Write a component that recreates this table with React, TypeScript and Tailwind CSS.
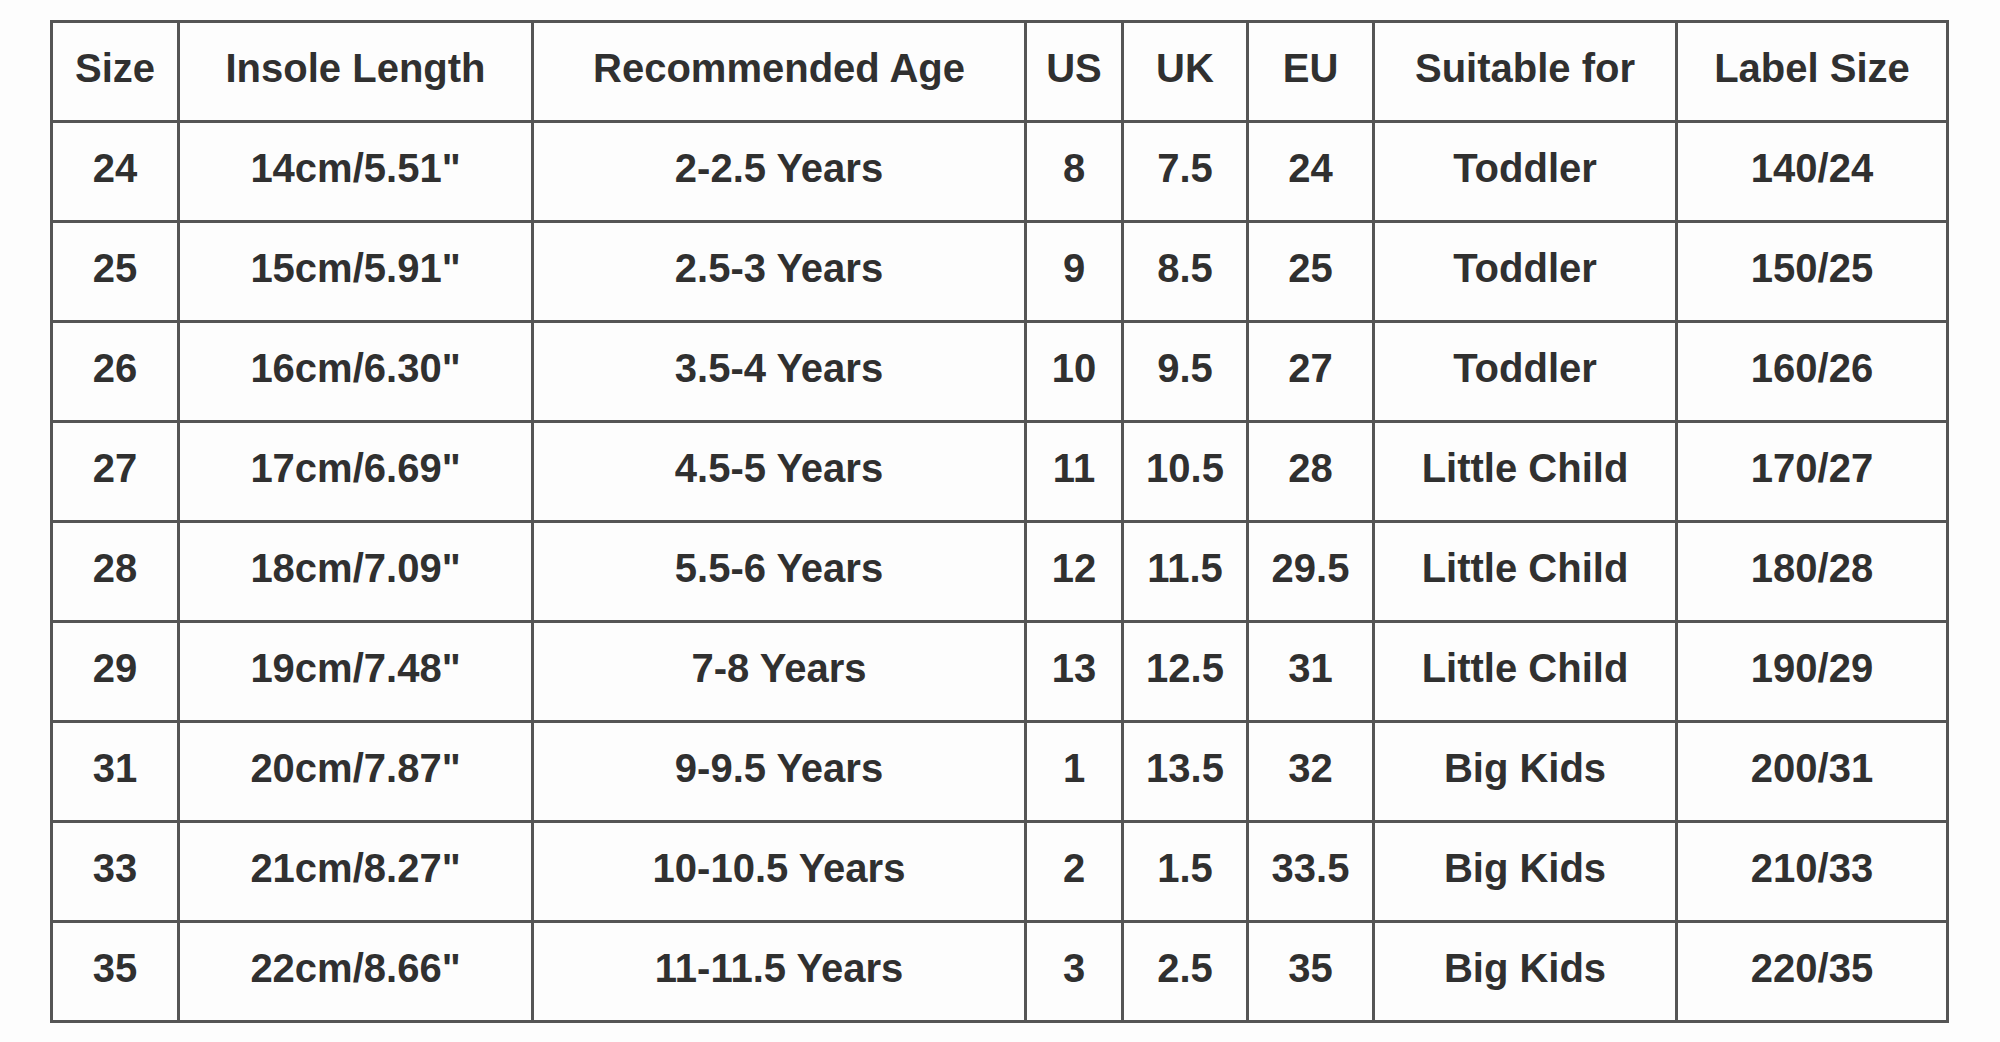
const headers = ['Size', 'Insole Length', 'Recommended Age', 'US', 'UK', 'EU', 'Suitable for', 'Label Size'];

const rows: string[][] = [
  ['24', '14cm/5.51"', '2-2.5 Years', '8', '7.5', '24', 'Toddler', '140/24'],
  ['25', '15cm/5.91"', '2.5-3 Years', '9', '8.5', '25', 'Toddler', '150/25'],
  ['26', '16cm/6.30"', '3.5-4 Years', '10', '9.5', '27', 'Toddler', '160/26'],
  ['27', '17cm/6.69"', '4.5-5 Years', '11', '10.5', '28', 'Little Child', '170/27'],
  ['28', '18cm/7.09"', '5.5-6 Years', '12', '11.5', '29.5', 'Little Child', '180/28'],
  ['29', '19cm/7.48"', '7-8 Years', '13', '12.5', '31', 'Little Child', '190/29'],
  ['31', '20cm/7.87"', '9-9.5 Years', '1', '13.5', '32', 'Big Kids', '200/31'],
  ['33', '21cm/8.27"', '10-10.5 Years', '2', '1.5', '33.5', 'Big Kids', '210/33'],
  ['35', '22cm/8.66"', '11-11.5 Years', '3', '2.5', '35', 'Big Kids', '220/35'],
];

function Cell({ text }: { text: string }) {
  return (
    <div className="flex h-[97px] items-center justify-center bg-[#fdfdfd] pb-[7px] text-[40px] font-bold leading-none text-[#303030]">
      {text}
    </div>
  );
}

export default function App() {
  return (
    <div className="min-h-screen w-full bg-[#fdfdfd] pl-[50px] pt-[20px] [font-family:Liberation_Sans,Arial,sans-serif]">
      <div className="grid w-fit grid-cols-[124px_351px_490px_94px_122px_123px_300px_268px] gap-[3px] bg-[#555] p-[3px]">
        {headers.map((h) => (
          <Cell key={h} text={h} />
        ))}
        {rows.map((row, i) => row.map((c, j) => <Cell key={`${i}-${j}`} text={c} />))}
      </div>
    </div>
  );
}
